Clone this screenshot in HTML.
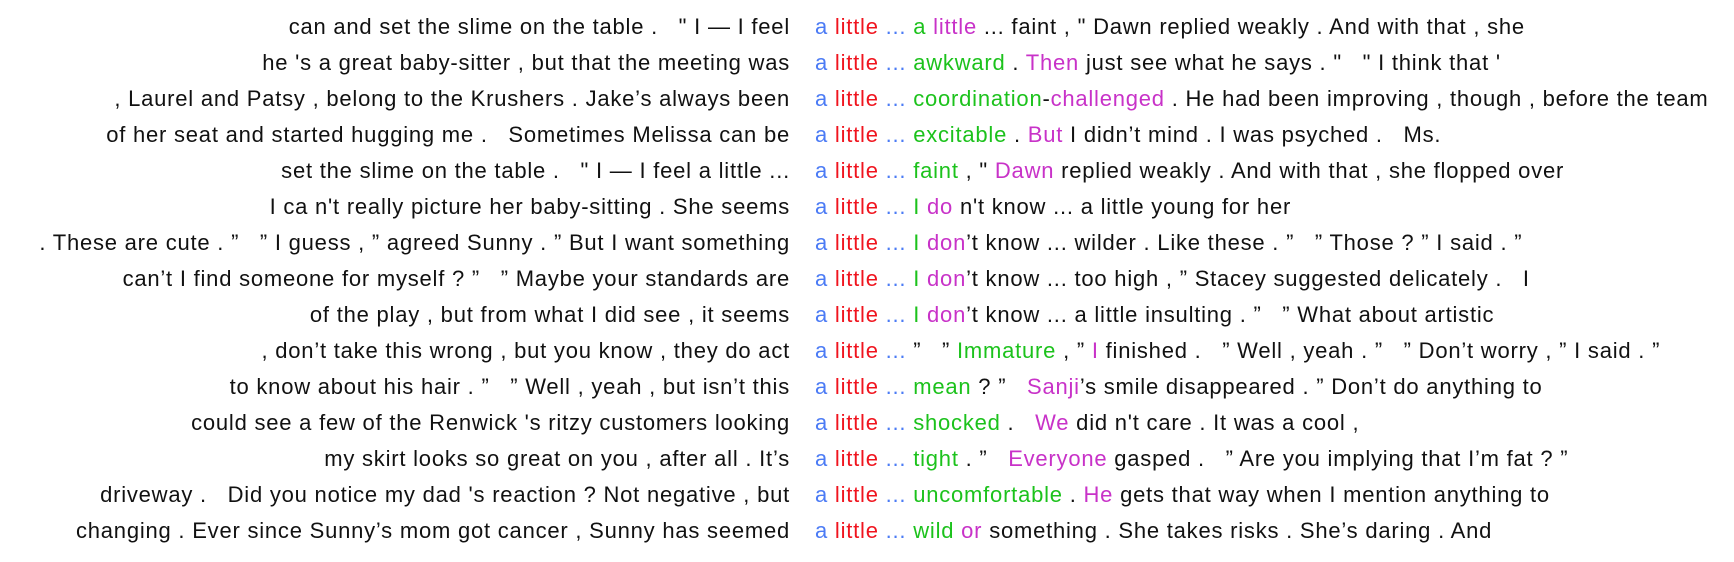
<!DOCTYPE html><html><head><meta charset="utf-8"><style>
body{margin:0;width:1734px;height:562px;background:#fff;font-family:"Liberation Sans",Arial,sans-serif;font-size:22px;letter-spacing:0.78px;color:#111;overflow:hidden;position:relative}
.l{position:absolute;right:944px;top:9px;text-align:right;white-space:pre;line-height:36px}
.r{position:absolute;left:815px;top:9px;white-space:pre;line-height:36px}
.b{color:#4b7bf5}.d{color:#f0141e}.g{color:#1cc21c}.m{color:#c832c8}
</style></head><body>
<div class="l">can and set the slime on the table .   " I — I feel
he 's a great baby-sitter , but that the meeting was
, Laurel and Patsy , belong to the Krushers . Jake’s always been
of her seat and started hugging me .   Sometimes Melissa can be
set the slime on the table .   " I — I feel a little ...
I ca n't really picture her baby-sitting . She seems
. These are cute . ”   ” I guess , ” agreed Sunny . ” But I want something
can’t I find someone for myself ? ”   ” Maybe your standards are
of the play , but from what I did see , it seems
, don’t take this wrong , but you know , they do act
to know about his hair . ”   ” Well , yeah , but isn’t this
could see a few of the Renwick 's ritzy customers looking
my skirt looks so great on you , after all . It’s
driveway .   Did you notice my dad 's reaction ? Not negative , but
changing . Ever since Sunny’s mom got cancer , Sunny has seemed</div>
<div class="r"><span class="b">a</span> <span class="d">little</span> <span class="b">...</span> <span class="g">a</span> <span class="m">little</span> ... faint , " Dawn replied weakly . And with that , she
<span class="b">a</span> <span class="d">little</span> <span class="b">...</span> <span class="g">awkward</span> . <span class="m">Then</span> just see what he says . "   " I think that '
<span class="b">a</span> <span class="d">little</span> <span class="b">...</span> <span class="g">coordination</span>-<span class="m">challenged</span> . He had been improving , though , before the team
<span class="b">a</span> <span class="d">little</span> <span class="b">...</span> <span class="g">excitable</span> . <span class="m">But</span> I didn’t mind . I was psyched .   Ms.
<span class="b">a</span> <span class="d">little</span> <span class="b">...</span> <span class="g">faint</span> , " <span class="m">Dawn</span> replied weakly . And with that , she flopped over
<span class="b">a</span> <span class="d">little</span> <span class="b">...</span> <span class="g">I</span> <span class="m">do</span> n't know ... a little young for her
<span class="b">a</span> <span class="d">little</span> <span class="b">...</span> <span class="g">I</span> <span class="m">don</span>’t know ... wilder . Like these . ”   ” Those ? ” I said . ”
<span class="b">a</span> <span class="d">little</span> <span class="b">...</span> <span class="g">I</span> <span class="m">don</span>’t know ... too high , ” Stacey suggested delicately .   I
<span class="b">a</span> <span class="d">little</span> <span class="b">...</span> <span class="g">I</span> <span class="m">don</span>’t know ... a little insulting . ”   ” What about artistic
<span class="b">a</span> <span class="d">little</span> <span class="b">...</span> ”   ” <span class="g">Immature</span> , ” <span class="m">I</span> finished .   ” Well , yeah . ”   ” Don’t worry , ” I said . ”
<span class="b">a</span> <span class="d">little</span> <span class="b">...</span> <span class="g">mean</span> ? ”   <span class="m">Sanji</span>’s smile disappeared . ” Don’t do anything to
<span class="b">a</span> <span class="d">little</span> <span class="b">...</span> <span class="g">shocked</span> .   <span class="m">We</span> did n't care . It was a cool ,
<span class="b">a</span> <span class="d">little</span> <span class="b">...</span> <span class="g">tight</span> . ”   <span class="m">Everyone</span> gasped .   ” Are you implying that I’m fat ? ”
<span class="b">a</span> <span class="d">little</span> <span class="b">...</span> <span class="g">uncomfortable</span> . <span class="m">He</span> gets that way when I mention anything to
<span class="b">a</span> <span class="d">little</span> <span class="b">...</span> <span class="g">wild</span> <span class="m">or</span> something . She takes risks . She’s daring . And</div>
</body></html>
